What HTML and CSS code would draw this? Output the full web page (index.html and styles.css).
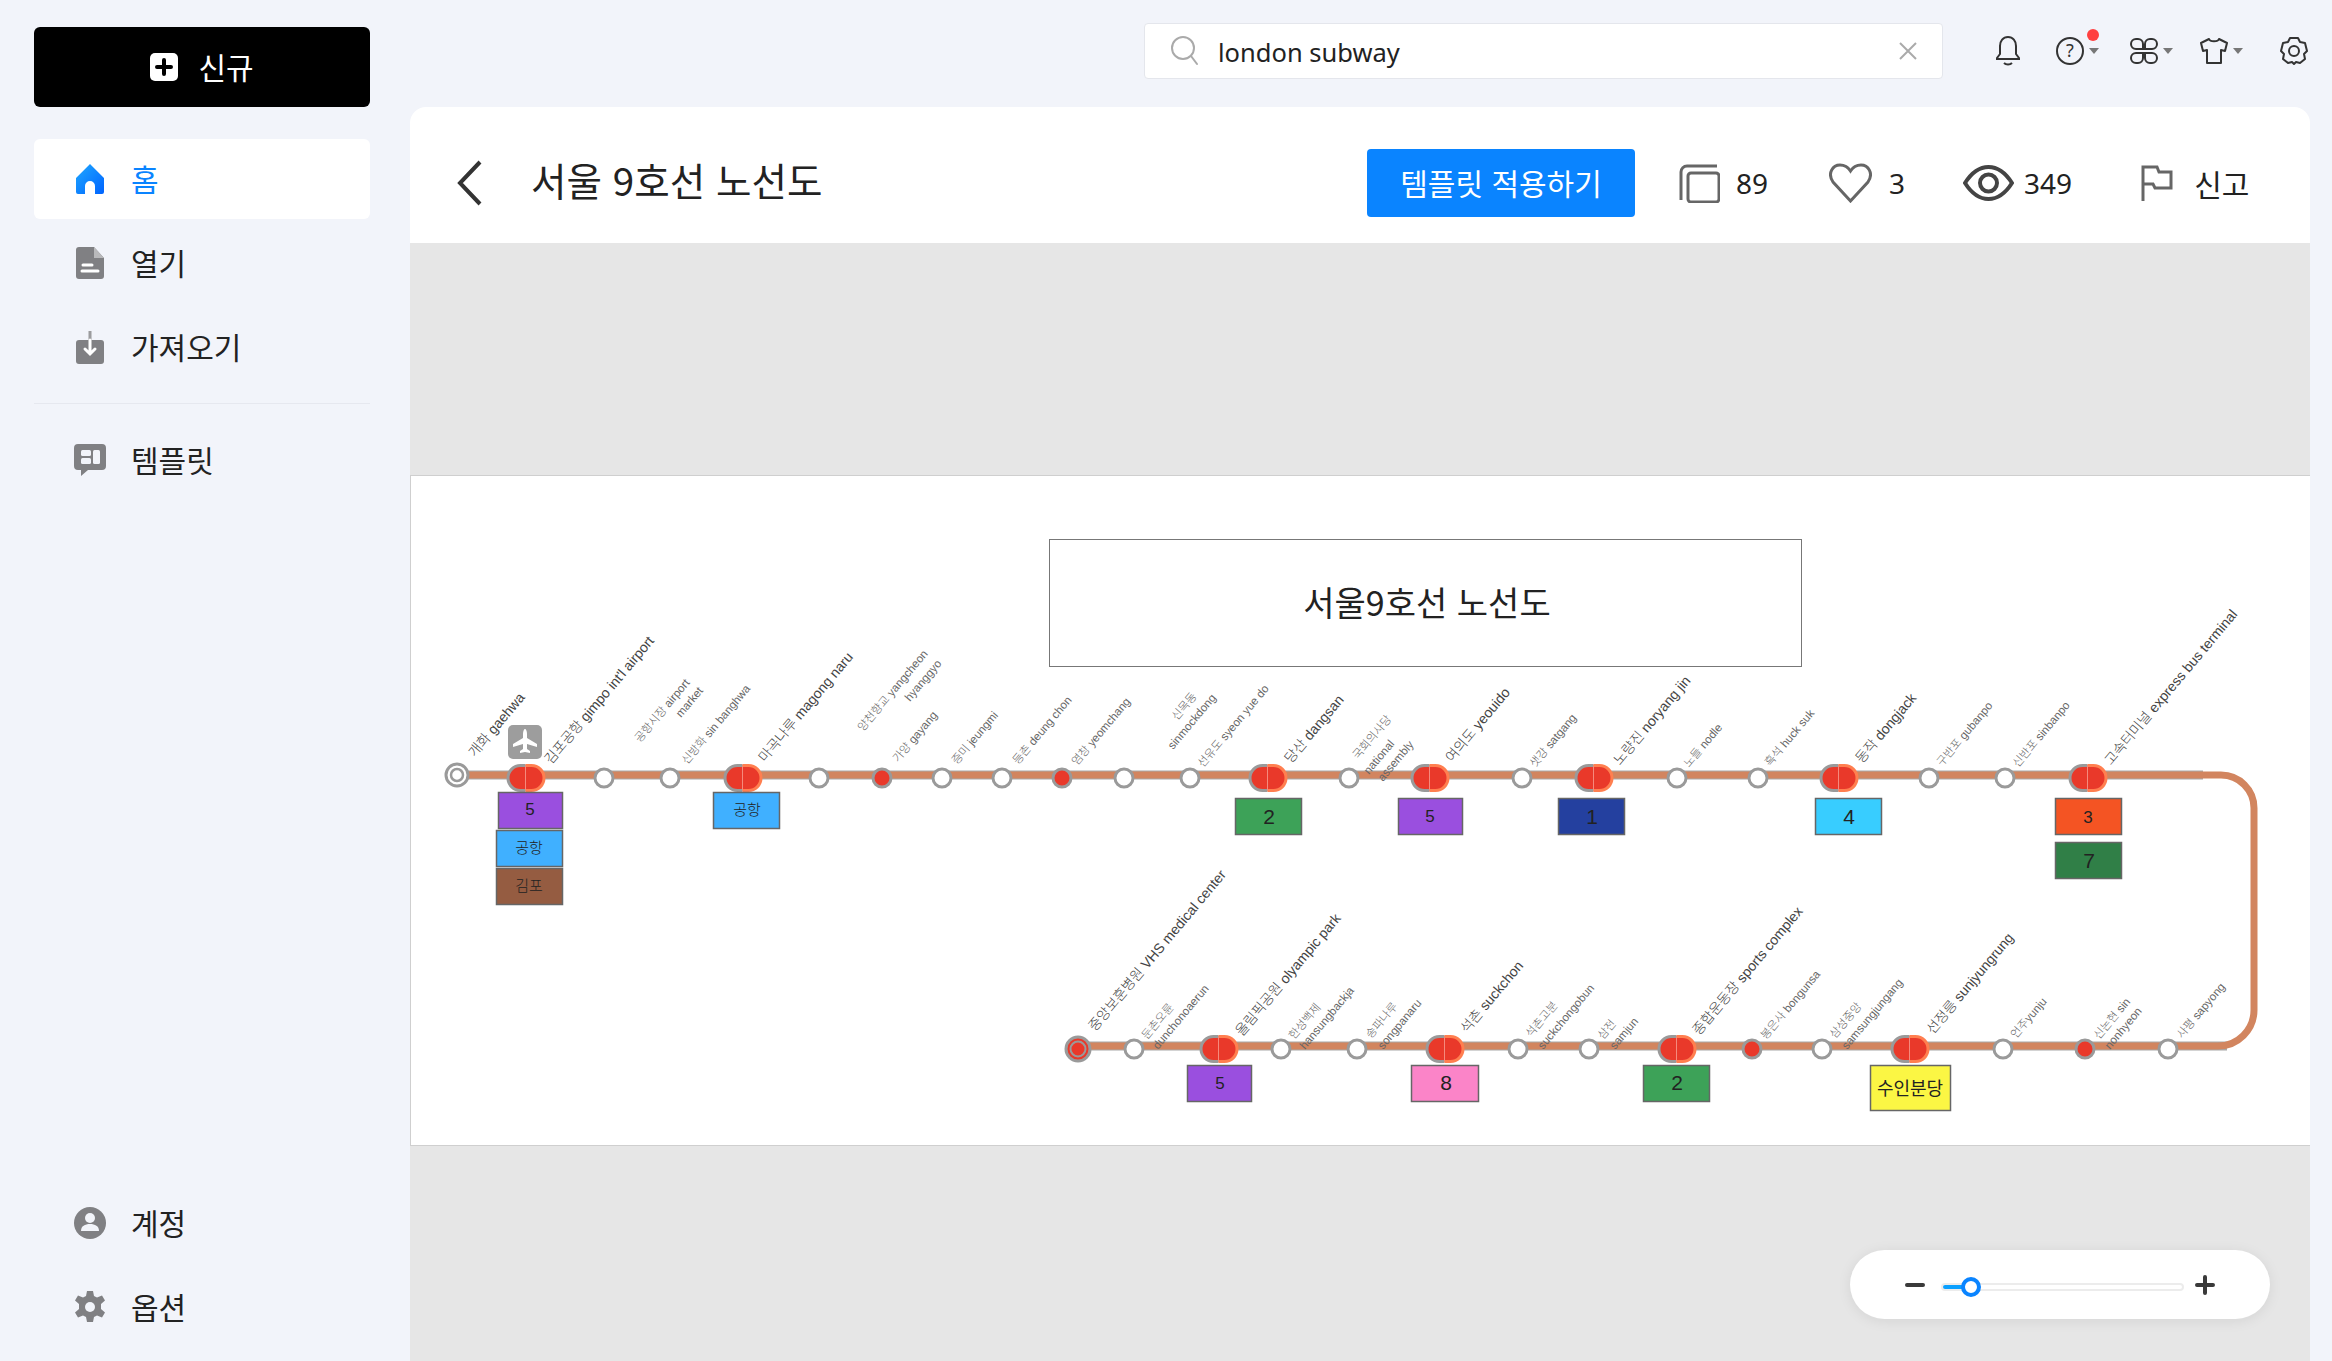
FILE: index.html
```html
<!DOCTYPE html>
<html lang="ko">
<head>
<meta charset="utf-8">
<title>서울 9호선 노선도</title>
<link rel="stylesheet" href="styles.css">
</head>
<body>
<div class="app">
  <aside class="sidebar">
    <button class="new-btn">
      <svg class="new-ico" viewBox="0 0 28 28"><rect width="28" height="28" rx="5" fill="#fff"/><path d="M14 7v14M7 14h14" stroke="#000" stroke-width="4" stroke-linecap="round"/></svg>
      <span>신규</span>
    </button>
    <nav class="nav">
      <a class="nav-item active">
        <span class="nav-ico"><svg width="28" height="30" viewBox="0 0 28 30"><defs><linearGradient id="homeg" x1="0" y1="0" x2="1" y2="1"><stop offset="0" stop-color="#1fa8ff"/><stop offset="1" stop-color="#0064ff"/></linearGradient></defs><path d="M14 0 28 14v14a2 2 0 0 1-2 2h-7v-8a5 5 0 0 0-10 0v8H2a2 2 0 0 1-2-2V14Z" fill="url(#homeg)"/></svg></span>
        <span class="nav-label">홈</span>
      </a>
      <a class="nav-item">
        <span class="nav-ico"><svg width="28" height="32" viewBox="0 0 28 32"><path d="M3 0h15l10 11v18a3 3 0 0 1-3 3H3a3 3 0 0 1-3-3V3a3 3 0 0 1 3-3Z" fill="#808083"/><path d="M18 0l10 11H18Z" fill="#b9b9bb"/><path d="M7 18h9M6 24h16" stroke="#fff" stroke-width="3" stroke-linecap="round"/></svg></span>
        <span class="nav-label">열기</span>
      </a>
      <a class="nav-item">
        <span class="nav-ico"><svg width="28" height="33" viewBox="0 0 28 33"><rect y="9" width="28" height="24" rx="3" fill="#808083"/><path d="M14 0v9" stroke="#9b9b9d" stroke-width="3"/><path d="M14 9v13M9 18l5 5 5-5" fill="none" stroke="#fff" stroke-width="3" stroke-linecap="round"/></svg></span>
        <span class="nav-label">가져오기</span>
      </a>
    </nav>
    <div class="nav-sep"></div>
    <nav class="nav">
      <a class="nav-item">
        <span class="nav-ico"><svg width="32" height="32" viewBox="0 0 32 32"><path d="M4 0h24a4 4 0 0 1 4 4v18a4 4 0 0 1-4 4H14l-7 6v-6H4a4 4 0 0 1-4-4V4a4 4 0 0 1 4-4Z" fill="#808083"/><rect x="7" y="6" width="10" height="6" rx="1.5" fill="#f2f4fa"/><rect x="7" y="14" width="10" height="6" rx="1.5" fill="#f2f4fa"/><rect x="19" y="6" width="7" height="14" rx="1.5" fill="#f2f4fa"/></svg></span>
        <span class="nav-label">템플릿</span>
      </a>
    </nav>
    <nav class="nav nav-bottom">
      <a class="nav-item">
        <span class="nav-ico"><svg width="32" height="32" viewBox="0 0 32 32"><circle cx="16" cy="16" r="16" fill="#808083"/><circle cx="16" cy="11" r="5" fill="#f2f4fa"/><path d="M7 24c0-5 4-7 9-7s9 2 9 7Z" fill="#f2f4fa"/></svg></span>
        <span class="nav-label">계정</span>
      </a>
      <a class="nav-item">
        <span class="nav-ico"><svg width="32" height="32" viewBox="0 0 32 32"><path d="M13 0h6l1 5 3 1.500 5-2 3 5-4 3.500v5l4 3.500-3 5-5-2-3 1.500-1 5h-6l-1-5-3-1.500-5 2-3-5 4-3.500v-5l-4-3.500 3-5 5 2 3-1.500Z" fill="#808083"/><circle cx="16" cy="16" r="5" fill="#f2f4fa"/></svg></span>
        <span class="nav-label">옵션</span>
      </a>
    </nav>
  </aside>

  <main class="main">
    <header class="topbar">
      <div class="search">
        <svg class="search-ico" width="32" height="32" viewBox="0 0 32 32"><circle cx="14" cy="13" r="11" fill="none" stroke="#aaa" stroke-width="2"/><path d="M22 21l6 8" stroke="#aaa" stroke-width="2" stroke-linecap="round"/></svg>
        <span class="search-text">london subway</span>
        <svg class="search-x" width="20" height="20" viewBox="0 0 20 20"><path d="M2 2l16 16M18 2 2 18" stroke="#aaa" stroke-width="2"/></svg>
      </div>
      <div class="tools">
        <svg class="tool-bell" width="28" height="30" viewBox="0 0 28 30"><path d="M14 1c-5 0-8 4-8 9v8l-3 4v1h22v-1l-3-4v-8c0-5-3-9-8-9Z" fill="none" stroke="#333" stroke-width="2"/><path d="M10 27c2 2 6 2 8 0" fill="none" stroke="#333" stroke-width="2"/></svg>
        <span class="tool tool-q"><svg width="28" height="28" viewBox="0 0 28 28"><circle cx="14" cy="14" r="13" fill="none" stroke="#333" stroke-width="2"/><text x="14" y="20" text-anchor="middle" class="q-mark">?</text></svg><i class="red-dot"></i><i class="caret"></i></span>
        <span class="tool tool-g"><svg width="28" height="28" viewBox="0 0 28 28"><g fill="none" stroke="#333" stroke-width="2"><path d="M6 2h2a5 5 0 0 1 5 5v5H6a5 5 0 0 1 0-10Z"/><path d="M22 2h-2a5 5 0 0 0-5 5v5h7a5 5 0 0 0 0-10Z"/><path d="M6 26h2a5 5 0 0 0 5-5v-5H6a5 5 0 0 0 0 10Z"/><path d="M22 26h-2a5 5 0 0 1-5-5v-5h7a5 5 0 0 1 0 10Z"/></g></svg><i class="caret"></i></span>
        <span class="tool tool-s"><svg width="28" height="28" viewBox="0 0 28 28"><path d="M9 2c1 3 9 3 10 0l8 4-2 8-4-1v13H7V13l-4 1-2-8Z" fill="none" stroke="#333" stroke-width="2" stroke-linejoin="round"/></svg><i class="caret"></i></span>
        <svg class="tool-gear" width="28" height="30" viewBox="0 0 28 30"><path d="M10 2h8l2 4 5 1 2 8-3 3 1 5-5 4-4-1-2 2-2-2-4 1-5-4 1-5-3-3 2-8 5-1Z" fill="none" stroke="#333" stroke-width="2" stroke-linejoin="round"/><circle cx="14" cy="15" r="5" fill="none" stroke="#333" stroke-width="2"/></svg>
      </div>
    </header>

    <section class="panel">
      <div class="panel-head">
        <svg class="back" width="26" height="46" viewBox="0 0 26 46"><path d="M23 2 3 23l20 21" fill="none" stroke="#333" stroke-width="4"/></svg>
        <h1 class="title">서울 9호선 노선도</h1>
        <button class="apply">템플릿 적용하기</button>
        <div class="stat stat-copy">
          <svg width="41" height="39" viewBox="0 0 41 39"><path d="M2 36V8a6 6 0 0 1 6-6h30" fill="none" stroke="#666" stroke-width="3"/><rect x="9" y="9" width="31" height="29" rx="3" fill="none" stroke="#666" stroke-width="3"/></svg>
          <span>89</span>
        </div>
        <div class="stat stat-heart">
          <svg width="43" height="40" viewBox="0 0 43 40"><path d="M21.500 38 4 19C-2 10 4 2 11 2c5 0 8 2 10.500 6C24 4 27 2 32 2c7 0 13 8 7 17Z" fill="none" stroke="#666" stroke-width="3"/></svg>
          <span>3</span>
        </div>
        <div class="stat stat-eye">
          <svg width="51" height="36" viewBox="0 0 51 36"><path d="M2 18C9 7 16 2 25.500 2S42 7 49 18c-7 11-14 16-23.500 16S9 29 2 18Z" fill="none" stroke="#444" stroke-width="4"/><circle cx="25.500" cy="18" r="8.500" fill="none" stroke="#444" stroke-width="4"/></svg>
          <span>349</span>
        </div>
        <div class="stat stat-flag">
          <svg width="32" height="36" viewBox="0 0 32 36"><path d="M2 36V2h14l2 5h12v16H14l-2-4H2" fill="none" stroke="#666" stroke-width="3"/></svg>
          <span>신고</span>
        </div>
      </div>

      <div class="canvas">
        <div class="sheet">
          <svg class="map" width="1898" height="669" viewBox="411 476 1898 669">
            <defs>
              <symbol id="pill" viewBox="0 0 38 28" width="38" height="28" overflow="visible">
                <rect x="1.500" y="1.500" width="35" height="25" rx="12" fill="#e9392a"/>
                <path d="M18.500 1.500H13.500a12 12 0 0 0 0 25h5" fill="none" stroke="#9a9a9a" stroke-width="3"/>
                <path d="M18.500 1.500h6a12 12 0 0 1 0 25h-6" fill="none" stroke="#ff7f50" stroke-width="3"/>
                <path d="M18.500 2v24" stroke="#f58a7c" stroke-width="1"/>
              </symbol>
              <symbol id="plain" viewBox="0 0 24 24" width="24" height="24">
                <circle cx="12" cy="12" r="9" fill="#fff" stroke="#9a9a9a" stroke-width="3"/>
              </symbol>
              <symbol id="red" viewBox="0 0 24 24" width="24" height="24">
                <circle cx="12" cy="12" r="9" fill="#e9392a" stroke="#9a9a9a" stroke-width="3"/>
              </symbol>
            </defs>

            <path class="line-edge" d="M457 775H2203"/>
            <path class="line-edge" d="M1078 1046H2227"/>
            <path class="line-core" d="M457 775H2221a33 33 0 0 1 33 33V1010a36 36 0 0 1-36 36H1078"/>

            <rect class="frame" x="1049.500" y="539.500" width="752" height="127"/>
            <text class="map-title" x="1427" y="616">서울9호선 노선도</text>

            <g class="start"><circle cx="457" cy="775" r="11" fill="#fff" stroke="#9a9a9a" stroke-width="3"/><circle cx="457" cy="775" r="6" fill="#fff" stroke="#9a9a9a" stroke-width="2.500"/></g>
            <g><circle cx="1078" cy="1049" r="12" fill="#e9392a" stroke="#9a9a9a" stroke-width="3"/><circle cx="1078" cy="1049" r="7.500" fill="#e9392a" stroke="#9a9a9a" stroke-width="2"/></g>

            <rect x="508" y="725" width="34" height="34" rx="5" fill="#9d9d9d"/>
            <path d="M525 729c1 0 2 2 2 5v4l10 6v3l-10-3v5l3 2v2l-5-1-5 1v-2l3-2v-5l-10 3v-3l10-6v-4c0-3 1-5 2-5Z" fill="#fff"/>

            <use href="#pill" x="507" y="764"/><use href="#pill" x="724" y="764"/><use href="#pill" x="1249" y="764"/><use href="#pill" x="1411" y="764"/><use href="#pill" x="1575" y="764"/><use href="#pill" x="1820" y="764"/><use href="#pill" x="2069" y="764"/>
            <use href="#pill" x="1200" y="1035"/><use href="#pill" x="1426" y="1035"/><use href="#pill" x="1658" y="1035"/><use href="#pill" x="1891" y="1035"/>

            <use href="#plain" x="592" y="766"/><use href="#plain" x="658" y="766"/><use href="#plain" x="807" y="766"/><use href="#red" x="870" y="766"/><use href="#plain" x="930" y="766"/><use href="#plain" x="990" y="766"/><use href="#red" x="1050" y="766"/><use href="#plain" x="1112" y="766"/><use href="#plain" x="1178" y="766"/><use href="#plain" x="1337" y="766"/><use href="#plain" x="1510" y="766"/><use href="#plain" x="1665" y="766"/><use href="#plain" x="1746" y="766"/><use href="#plain" x="1917" y="766"/><use href="#plain" x="1993" y="766"/>
            <use href="#plain" x="1122" y="1037"/><use href="#plain" x="1269" y="1037"/><use href="#plain" x="1345" y="1037"/><use href="#plain" x="1506" y="1037"/><use href="#plain" x="1577" y="1037"/><use href="#red" x="1740" y="1037"/><use href="#plain" x="1810" y="1037"/><use href="#plain" x="1991" y="1037"/><use href="#red" x="2073" y="1037"/><use href="#plain" x="2156" y="1037"/>

            <g class="box-g">
              <rect x="498.500" y="792.500" width="64" height="36" fill="#9a4fdf"/><text x="530" y="815" class="bx-m">5</text>
              <rect x="496.500" y="830.500" width="66" height="36" fill="#40b0ff"/><text x="529" y="853" class="bx-s">공항</text>
              <rect x="496.500" y="868.500" width="66" height="36" fill="#955c41"/><text x="529" y="891" class="bx-s">김포</text>
              <rect x="713.500" y="792.500" width="66" height="36" fill="#40b0ff"/><text x="747" y="815" class="bx-s">공항</text>
              <rect x="1235.500" y="798.500" width="66" height="36" fill="#3da258"/><text x="1269" y="824" class="bx-l">2</text>
              <rect x="1398.500" y="798.500" width="64" height="36" fill="#9a4fdf"/><text x="1430" y="822" class="bx-m">5</text>
              <rect x="1558.500" y="798.500" width="66" height="36" fill="#24409f"/><text x="1592" y="824" class="bx-l">1</text>
              <rect x="1815.500" y="798.500" width="66" height="36" fill="#38cdff"/><text x="1849" y="824" class="bx-l">4</text>
              <rect x="2055.500" y="798.500" width="66" height="36" fill="#f45423"/><text x="2088" y="823" class="bx-m">3</text>
              <rect x="2055.500" y="842.500" width="66" height="36" fill="#307f47"/><text x="2089" y="868" class="bx-l">7</text>
              <rect x="1187.500" y="1065.500" width="64" height="36" fill="#9a4fdf"/><text x="1220" y="1089" class="bx-m">5</text>
              <rect x="1411.500" y="1065.500" width="67" height="36" fill="#fb84c8"/><text x="1446" y="1090" class="bx-l">8</text>
              <rect x="1643.500" y="1065.500" width="66" height="36" fill="#3da258"/><text x="1677" y="1090" class="bx-l">2</text>
              <rect x="1870.500" y="1065.500" width="80" height="45" fill="#fbf644"/><text x="1910" y="1095" class="bx-y">수인분당</text>
            </g>

            <g class="lbl-lg">
              <text transform="translate(475 758) rotate(-50)">개화 gaehwa</text>
              <text transform="translate(551 765) rotate(-50)">김포공항 gimpo int'l airport</text>
              <text transform="translate(765 763) rotate(-50)">마곡나루 magong naru</text>
              <text transform="translate(1291 764) rotate(-50)">당산 dangsan</text>
              <text transform="translate(1452 763) rotate(-50)">여의도 yeouido</text>
              <text transform="translate(1620 766) rotate(-50)">노량진 noryang jin</text>
              <text transform="translate(1862 764) rotate(-50)">동작 dongjack</text>
              <text transform="translate(2111 766) rotate(-50)">고속터미널 express bus terminal</text>
              <text transform="translate(1095 1032) rotate(-50)">중앙보훈병원 VHS medical center</text>
              <text transform="translate(1242 1037) rotate(-50)">올림픽공원 olyampic park</text>
              <text transform="translate(1467 1034) rotate(-50)">석촌 suckchon</text>
              <text transform="translate(1699 1036) rotate(-50)">종합운동장 sports complex</text>
              <text transform="translate(1933 1035) rotate(-50)">선정릉 sunjyungrung</text>
            </g>
            <g class="lbl-sm">
              <text transform="translate(640 743) rotate(-50)">공항시장 airport</text>
              <text transform="translate(681 718) rotate(-50)">market</text>
              <text transform="translate(687 765) rotate(-50)">신방화 sin banghwa</text>
              <text transform="translate(863 732) rotate(-50)">양천향교 yangcheon</text>
              <text transform="translate(910 702) rotate(-50)">hyanggyo</text>
              <text transform="translate(898 763) rotate(-50)">가양 gayang</text>
              <text transform="translate(957 765) rotate(-50)">증미 jeungmi</text>
              <text transform="translate(1018 765) rotate(-50)">등촌 deung chon</text>
              <text transform="translate(1077 766) rotate(-50)">염창 yeomchang</text>
              <text transform="translate(1177 721) rotate(-50)">신목동</text>
              <text transform="translate(1173 750) rotate(-50)">sinmockdong</text>
              <text transform="translate(1203 768) rotate(-50)">선유도 syeon yue do</text>
              <text transform="translate(1358 760) rotate(-50)">국회의사당</text>
              <text transform="translate(1369 775) rotate(-50)">national</text>
              <text transform="translate(1383 782) rotate(-50)">assembly</text>
              <text transform="translate(1535 768) rotate(-50)">샛강 satgang</text>
              <text transform="translate(1689 768) rotate(-50)">노들 nodle</text>
              <text transform="translate(1770 767) rotate(-50)">흑석 huck suk</text>
              <text transform="translate(1942 767) rotate(-50)">구반포 gubanpo</text>
              <text transform="translate(2018 768) rotate(-50)">신반포 sinbanpo</text>
              <text transform="translate(1147 1040) rotate(-50)">둔촌오륜</text>
              <text transform="translate(1158 1050) rotate(-50)">dunchonoaerun</text>
              <text transform="translate(1294 1040) rotate(-50)">한성백제</text>
              <text transform="translate(1305 1050) rotate(-50)">hansungbackja</text>
              <text transform="translate(1371 1039) rotate(-50)">송파나루</text>
              <text transform="translate(1383 1050) rotate(-50)">songpanaru</text>
              <text transform="translate(1531 1038) rotate(-50)">석촌고분</text>
              <text transform="translate(1543 1050) rotate(-50)">suckchongobun</text>
              <text transform="translate(1603 1040) rotate(-50)">삼전</text>
              <text transform="translate(1615 1050) rotate(-50)">samjun</text>
              <text transform="translate(1766 1040) rotate(-50)">봉은사 bongunsa</text>
              <text transform="translate(1835 1039) rotate(-50)">삼성중앙</text>
              <text transform="translate(1847 1050) rotate(-50)">samsungjungang</text>
              <text transform="translate(2016 1039) rotate(-50)">언주yunju</text>
              <text transform="translate(2099 1040) rotate(-50)">신논현 sin</text>
              <text transform="translate(2110 1050) rotate(-50)">nonhyeon</text>
              <text transform="translate(2182 1039) rotate(-50)">사평 sapyong</text>
            </g>
          </svg>
        </div>
        <div class="zoom">
          <svg width="20" height="6" viewBox="0 0 20 6"><path d="M2 3h16" stroke="#3a3a3a" stroke-width="4" stroke-linecap="round"/></svg>
          <div class="slider"><div class="slider-fill"></div><div class="slider-thumb"></div></div>
          <svg width="20" height="20" viewBox="0 0 20 20"><path d="M2 10h16M10 2v16" stroke="#3a3a3a" stroke-width="4" stroke-linecap="round"/></svg>
        </div>
      </div>
    </section>
  </main>
</div>
</body>
</html>
```

FILE: styles.css
```css
* { box-sizing: border-box; }
html, body { margin: 0; height: 100%; overflow: hidden; }
body { background: #f2f4fa; font-family: "Noto Sans", "Noto Sans CJK KR", sans-serif; color: #222; }
.app { display: flex; height: 1361px; }

.sidebar { width: 410px; flex: none; display: flex; flex-direction: column; padding: 27px 40px 14px 34px; }
.new-btn { height: 80px; display: flex; align-items: center; justify-content: center; gap: 20px; background: #000; color: #fff; border: 0; border-radius: 6px; font: 400 30px "Noto Sans CJK KR", sans-serif; margin-bottom: 32px; }
.new-btn span { margin-top: -2px; }
.new-ico { width: 28px; height: 28px; }
.nav { display: flex; flex-direction: column; gap: 4px; }
.nav-bottom { margin-top: auto; }
.nav-item { height: 80px; display: flex; align-items: center; padding-left: 38px; gap: 23px; border-radius: 6px; font: 400 30px "Noto Sans CJK KR", sans-serif; color: #222; }
.nav-item.active { background: #fff; color: #0a84ff; }
.nav-ico { width: 36px; display: flex; justify-content: center; }
.nav-label { margin-top: -2px; }
.nav-sep { height: 1px; background: #e6e8ef; margin: 16px 0; }

.main { flex: 1; min-width: 0; display: flex; flex-direction: column; margin-right: 22px; }
.topbar { height: 107px; flex: none; display: flex; align-items: flex-start; padding-top: 23px; padding-left: 734px; }
.search { width: 799px; height: 56px; background: #fff; border: 1px solid #e4e6ec; border-radius: 4px; display: flex; align-items: center; padding: 0 24px 0 24px; }
.search-ico { flex: none; }
.search-text { margin-left: 17px; font-size: 25.500px; color: #222; flex: 1; padding-top: 2px; }
.search-x { flex: none; }
.tools { display: flex; align-items: center; height: 56px; margin-left: 51px; margin-right: -54px; }
.tool { position: relative; display: flex; align-items: center; }
.tool-q { margin-left: 34px; }
.tool-g { margin-left: 31px; }
.tool-s { margin-left: 27px; }
.tool-gear { margin-left: 37px; }
.caret { width: 0; height: 0; border-left: 5px solid transparent; border-right: 5px solid transparent; border-top: 6px solid #777; margin-left: 5px; }
.red-dot { position: absolute; left: 31px; top: -8px; width: 12px; height: 12px; border-radius: 50%; background: #ff4040; }
.q-mark { font: 18px "Noto Sans", sans-serif; fill: #333; }

.panel { flex: 1; min-height: 0; background: #fff; border-radius: 16px 16px 0 0; display: flex; flex-direction: column; overflow: hidden; }
.panel-head { height: 136px; flex: none; display: flex; align-items: center; padding: 16px 0 0 47px; }
.back { flex: none; }
.title { margin: -8px 0 0 48px; font: 400 38.600px "Noto Sans CJK KR", sans-serif; color: #222; width: 836px; white-space: nowrap; flex: none; }
.apply { width: 268px; height: 68px; flex: none; background: #0a84ff; color: #fff; border: 0; border-radius: 4px; padding: 0 0 3px; font: 400 30px "Noto Sans CJK KR", sans-serif; }
.stat { display: flex; align-items: center; font-size: 28px; color: #222; }
.stat span { white-space: nowrap; }
.stat-copy { margin-left: 44px; gap: 16px; }
.stat-heart { margin-left: 61px; gap: 17px; }
.stat-eye { margin-left: 58px; gap: 10px; }
.stat-flag { margin-left: 69px; gap: 21px; font-family: "Noto Sans CJK KR", sans-serif; font-size: 30px; }

.canvas { flex: 1; min-height: 0; background: #e6e6e6; padding-top: 233px; position: relative; }
.sheet { height: 669px; margin: 0 0 0 1px; background: #fff; box-shadow: 0 0 0 1px #cfcfcf; }
.map { display: block; }
.line-edge { stroke: #a8a8a8; stroke-width: 9; fill: none; }
.line-core { stroke: #d2855f; stroke-width: 7; fill: none; }
.frame { fill: #fff; stroke: #777; stroke-width: 1; }
.map-title { font: 400 34px "Noto Sans CJK KR", sans-serif; fill: #222; text-anchor: middle; }
.box-g rect { stroke: #666; stroke-width: 1.500; }
.box-g text { text-anchor: middle; fill: #222; }
.bx-s { font: 300 15px "Liberation Sans", "Noto Sans CJK KR", sans-serif; }
.bx-m { font: 400 17px "Liberation Sans", "Noto Sans CJK KR", sans-serif; }
.bx-l { font: 400 21px "Liberation Sans", "Noto Sans CJK KR", sans-serif; }
.bx-y { font: 400 18px "Noto Sans CJK KR", sans-serif; }
.lbl-lg text { font: 300 14px "Liberation Sans", "Noto Sans CJK KR", sans-serif; fill: #444; }
.lbl-sm text { font: 300 11.500px "Liberation Sans", "Noto Sans CJK KR", sans-serif; fill: #666; }

.zoom { position: absolute; right: 40px; bottom: 42px; width: 420px; height: 69px; background: #fff; border-radius: 35px; box-shadow: 0 2px 14px rgba(0,0,0,.08); display: flex; align-items: center; padding-left: 55px; }
.slider { position: relative; width: 243px; height: 8px; margin: 4px 11px 0 16px; border: 2px solid #ececec; border-radius: 4px; background: #fff; }
.slider-fill { position: absolute; left: 0; top: 0; width: 24px; height: 4px; background: #0aa0ff; border-radius: 2px; }
.slider-thumb { position: absolute; left: 18px; top: -8px; width: 20px; height: 20px; border-radius: 50%; background: #fff; border: 4px solid #0a84ff; }
```
